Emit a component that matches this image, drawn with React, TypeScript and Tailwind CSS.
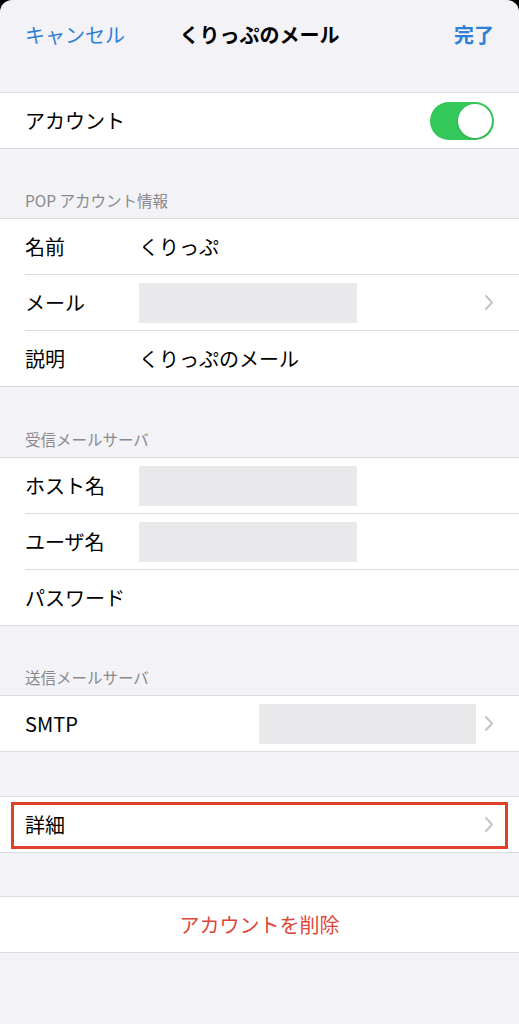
import React from 'react'

const font = { fontFamily: '"Noto Sans CJK JP", "Noto Sans", sans-serif' }

const Chevron = () => (
	<svg width="10" height="17" viewBox="0 0 10 17" className="shrink-0">
		<path d="M2 2l6 6.5L2 15" fill="none" stroke="#c4c4c7" strokeWidth="2" strokeLinecap="round" strokeLinejoin="round" />
	</svg>
)

const Masked = ({ className }: { className: string }) => <div className={`bg-[#e9e9eb] h-[40px] ${className}`} />

const Row: React.FC<{ label: string; last?: boolean; children?: React.ReactNode }> = ({ label, last, children }) => (
	<div className={`flex items-center pl-[25px] ${last ? 'h-[55px]' : 'h-[56px]'}`}>
		<div className={`flex h-full flex-1 items-center pr-[25px] ${last ? '' : 'border-b border-[#dcdce0]'}`}>
			<div className="w-[114px] shrink-0 text-[20px] text-black">{label}</div>
			{children}
		</div>
	</div>
)

const Group: React.FC<{ children: React.ReactNode }> = ({ children }) => (
	<div className="border-y border-[#dcdce0] bg-white">{children}</div>
)

const Header = ({ title }: { title: string }) => (
	<div className="px-[25px] pb-[8px] text-[15.5px] leading-[20px] text-[#8a8a8e]">{title}</div>
)

export default function App() {
	return (
		<div className="min-h-[1024px] bg-black" style={font}>
			<div className="min-h-[1024px] overflow-hidden rounded-t-[12px] bg-[#f2f2f7]">
				<div className="grid h-[70px] grid-cols-[1fr_auto_1fr] items-center px-[25px] text-[20px]">
					<span className="text-[#2f7fd6]">キャンセル</span>
					<span className="font-bold text-black">くりっぷのメール</span>
					<span className="text-right font-bold text-[#2f7fd6]">完了</span>
				</div>
				<div className="h-[22px]" />
				<Group>
					<div className="flex h-[55px] items-center justify-between px-[25px]">
						<span className="text-[20px]">アカウント</span>
						<div className="flex h-[38px] w-[64px] items-center justify-end rounded-full bg-[#34c759] p-[2px]">
							<div className="h-[34px] w-[34px] rounded-full bg-white shadow" />
						</div>
					</div>
				</Group>
				<div className="h-[41px]" />
				<Header title="POP アカウント情報" />
				<Group>
					<Row label="名前">
						<span className="text-[20px]">くりっぷ</span>
					</Row>
					<Row label="メール">
						<Masked className="w-[218px]" />
						<div className="flex flex-1 justify-end">
							<Chevron />
						</div>
					</Row>
					<Row label="説明" last>
						<span className="text-[20px]">くりっぷのメール</span>
					</Row>
				</Group>
				<div className="h-[42px]" />
				<Header title="受信メールサーバ" />
				<Group>
					<Row label="ホスト名">
						<Masked className="w-[218px]" />
					</Row>
					<Row label="ユーザ名">
						<Masked className="w-[218px]" />
					</Row>
					<Row label="パスワード" last />
				</Group>
				<div className="h-[41px]" />
				<Header title="送信メールサーバ" />
				<Group>
					<Row label="SMTP" last>
						<div className="flex flex-1 items-center justify-end gap-[8px]">
							<Masked className="w-[217px]" />
							<Chevron />
						</div>
					</Row>
				</Group>
				<div className="h-[44px]" />
				<div className="relative">
					<Group>
						<Row label="詳細" last>
							<div className="flex flex-1 justify-end">
								<Chevron />
							</div>
						</Row>
					</Group>
					<div className="pointer-events-none absolute left-[11px] right-[11px] top-[6px] bottom-[4px] border-[3px] border-[#e0402a]" />
				</div>
				<div className="h-[43px]" />
				<Group>
					<div className="flex h-[55px] items-center justify-center text-[20px] text-[#e0463a]">アカウントを削除</div>
				</Group>
			</div>
		</div>
	)
}
